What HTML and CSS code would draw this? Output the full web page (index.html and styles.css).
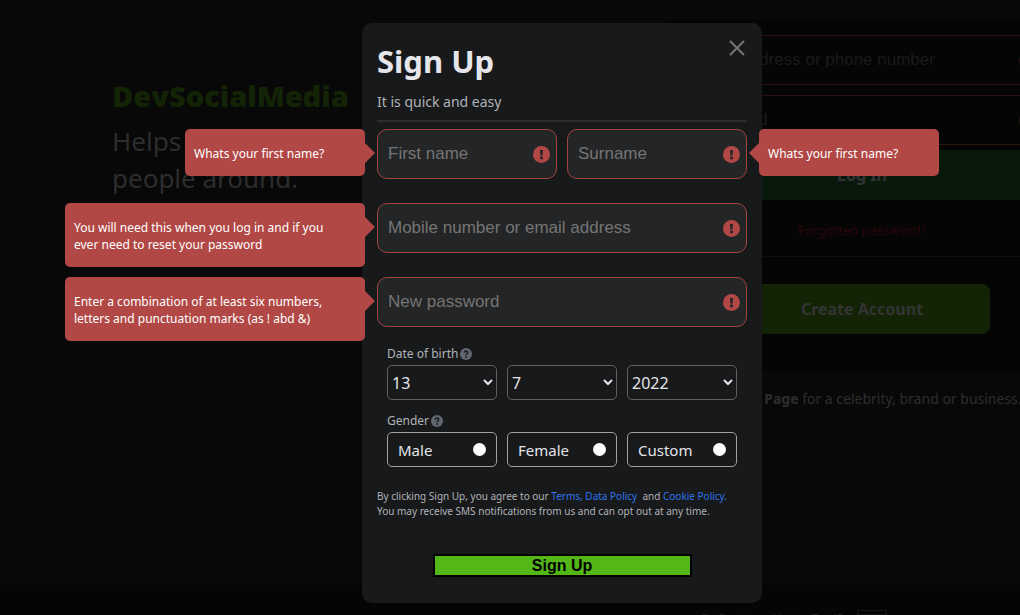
FILE: index.html
```html
<!DOCTYPE html>
<html lang="en">
<head>
<meta charset="utf-8">
<title>DevSocialMedia</title>
<link rel="stylesheet" href="styles.css">
</head>
<body>
<svg class="sprite" aria-hidden="true">
  <symbol id="alert" viewBox="0 0 17 17">
    <circle cx="8.5" cy="8.5" r="8.5" fill="currentColor"/>
    <path d="M7 4h3l-.4 5.400h-2.200z" fill="#242526"/>
    <rect x="7.100" y="10.500" width="2.800" height="2.800" rx=".6" fill="#242526"/>
  </symbol>
  <symbol id="help" viewBox="0 0 12 12">
    <circle cx="6" cy="6" r="6" fill="#606770"/>
    <path d="M4.300 4.700C4.300 2.400 7.800 2.500 7.800 4.500 7.800 5.700 6.100 5.800 6.100 7.200" fill="none" stroke="#18191a" stroke-width="1.400"/>
    <circle cx="6.100" cy="9" r=".9" fill="#18191a"/>
  </symbol>
</svg>

<div class="page">
  <main class="landing">
    <section class="hero">
      <h1 class="brand">DevSocialMedia</h1>
      <p class="tagline">Helps<br>people around.</p>
    </section>
    <section class="login">
      <form class="login-card">
        <div class="login-field"><input type="text" aria-label="Email address or phone number" placeholder="Email address or phone number"><svg class="alert"><use href="#alert"/></svg></div>
        <div class="login-field"><input type="password" aria-label="Password" placeholder="Password"><svg class="alert"><use href="#alert"/></svg></div>
        <button class="login-button" type="button">Log In</button>
        <a class="forgot" href="#">Forgotten password?</a>
        <button class="create-button" type="button">Create Account</button>
      </form>
      <p class="page-note"><b>Create a Page</b> for a celebrity, brand or business.</p>
    </section>
  </main>
  <footer class="footer"><span>De Bootstrap Hatton TotalE</span><span class="footer-box">+</span></footer>
</div>

<div class="overlay">
  <form class="modal" role="dialog" aria-labelledby="signup-title">
    <header class="modal-head">
      <h2 id="signup-title">Sign Up</h2>
      <p>It is quick and easy</p>
      <button class="close" type="button" aria-label="Close"><svg viewBox="0 0 16 16"><path d="M1 1l14 14M15 1L1 15" fill="none" stroke="currentColor" stroke-width="1.800"/></svg></button>
    </header>

    <div class="fields">
      <div class="field half">
        <input type="text" aria-label="First name" placeholder="First name">
        <svg class="alert"><use href="#alert"/></svg>
        <p class="tip tip-left tip-short">Whats your first name?</p>
      </div>
      <div class="field half">
        <input type="text" aria-label="Surname" placeholder="Surname">
        <svg class="alert"><use href="#alert"/></svg>
        <p class="tip tip-right tip-short">Whats your first name?</p>
      </div>
      <div class="field">
        <input type="text" aria-label="Mobile number or email address" placeholder="Mobile number or email address">
        <svg class="alert"><use href="#alert"/></svg>
        <p class="tip tip-left">You will need this when you log in and if you ever need to reset your password</p>
      </div>
      <div class="field">
        <input type="password" aria-label="New password" placeholder="New password">
        <svg class="alert"><use href="#alert"/></svg>
        <p class="tip tip-left">Enter a combination of at least six numbers, letters and punctuation marks (as ! abd &amp;)</p>
      </div>
    </div>

    <fieldset class="group">
      <legend>Date of birth<svg class="help"><use href="#help"/></svg></legend>
      <div class="options">
        <select aria-label="Day"><option>13</option></select>
        <select aria-label="Month"><option>7</option></select>
        <select aria-label="Year"><option>2022</option></select>
      </div>
    </fieldset>
    <fieldset class="group">
      <legend>Gender<svg class="help"><use href="#help"/></svg></legend>
      <div class="options">
        <label class="choice">Male<input type="radio" name="gender"></label>
        <label class="choice">Female<input type="radio" name="gender"></label>
        <label class="choice">Custom<input type="radio" name="gender"></label>
      </div>
    </fieldset>

    <p class="terms">By clicking Sign Up, you agree to our <a href="#">Terms, Data Policy</a> &nbsp;and <a href="#">Cookie Policy.</a><br>You may receive SMS notifications from us and can opt out at any time.</p>
    <button class="submit" type="button">Sign Up</button>
  </form>
</div>
</body>
</html>
```

FILE: styles.css
```css
* { box-sizing: border-box; }
body {
  margin: 0;
  background: #080808;
  color: #2d2d2e;
  font-family: "Noto Sans", "Open Sans", sans-serif;
}
h1, h2, p, fieldset, legend { margin: 0; padding: 0; }
fieldset { border: 0; min-width: 0; }
button, input, select { font: inherit; }
a { text-decoration: none; }
.sprite { display: none; }
.alert { flex: none; width: 17px; height: 17px; color: #b14845; }

.page {
  display: flex;
  flex-direction: column;
  height: 100vh;
  overflow: hidden;
}
.landing {
  display: flex;
  flex: 1 0 auto;
  justify-content: space-between;
  padding: 20px 0 0 112px;
}
.hero { padding-top: 53px; }
.brand {
  color: #132406;
  font-family: "Open Sans", "Noto Sans", sans-serif;
  font-size: 29px;
  line-height: 46px;
  font-weight: 800;
}
.tagline { font-size: 26px; line-height: 37px; padding-top: 4px; }
.login { flex: 0 0 400px; margin-right: -42px; }
.login-card {
  display: flex;
  flex-direction: column;
  height: 351px;
  padding: 15px;
  border-radius: 8px;
  background: #050505;
}
.login-field {
  display: flex;
  align-items: center;
  height: 50px;
  margin-bottom: 10px;
  padding: 0 10px 0 15px;
  border: 1px solid #2b1111;
  border-radius: 6px;
}
.login-field input {
  flex: 1;
  min-width: 0;
  padding: 0;
  border: 0;
  background: transparent;
  font: 17px "Liberation Sans", sans-serif;
}
.login-field input::placeholder { color: #1a1a1a; }
.login-field .alert { color: #2b1111; }
.login-button, .create-button {
  height: 50px;
  border: 0;
  border-radius: 8px;
  color: #333;
  font-size: 16px;
  font-weight: 700;
}
.login-button { margin-top: -5px; background: #08190c; }
.forgot {
  padding: 20px 0 15px;
  border-bottom: 1px solid #0e0e0e;
  color: #2b0609;
  font-size: 13px;
  line-height: 21px;
  text-align: center;
}
.create-button {
  align-self: center;
  width: 256px;
  margin-top: 27px;
  background: #132406;
}
.page-note {
  padding-top: 18px;
  font-size: 14px;
  line-height: 20px;
  text-align: center;
  white-space: nowrap;
}
.footer {
  display: flex;
  flex: 0 0 30px;
  gap: 14px;
  min-height: 0;
  padding: 25px 0 0 702px;
  background: #050505;
  color: #202020;
  font-size: 11px;
  line-height: 16px;
  white-space: nowrap;
}
.footer-box { width: 30px; border: 1px solid #151515; text-align: center; }

.overlay {
  position: fixed;
  inset: 0;
  display: flex;
  justify-content: center;
  align-items: flex-start;
  padding: 23px 0 0 104px;
}
.modal {
  display: flex;
  flex-direction: column;
  width: 400px;
  padding: 13px 15px 26px;
  border-radius: 10px;
  background: #18191a;
  color: #b0b3b8;
}
.modal-head {
  position: relative;
  margin-bottom: 7px;
  padding-bottom: 8px;
  border-bottom: 2px solid #2b2c2e;
}
.modal-head h2 {
  color: #e4e6eb;
  font-size: 31px;
  line-height: 50px;
}
.modal-head p { padding-top: 6px; font-size: 14px; line-height: 20px; }
.close {
  position: absolute;
  top: 4px;
  right: 2px;
  width: 16px;
  height: 16px;
  padding: 0;
  border: 0;
  background: none;
  color: #777879;
}
.close svg { display: block; }

.fields {
  display: grid;
  grid-template-columns: repeat(2, minmax(0, 1fr));
  gap: 24px 10px;
}
.field {
  position: relative;
  display: flex;
  align-items: center;
  grid-column: 1 / -1;
  height: 50px;
  padding: 0 6px 0 10px;
  border: 1px solid #a44340;
  border-radius: 10px;
  background: #242526;
}
.field.half { grid-column: auto; }
.field input {
  flex: 1;
  min-width: 0;
  padding: 0;
  border: 0;
  background: transparent;
  color: #e4e6eb;
  font: 17px "Liberation Sans", sans-serif;
}
.field input::placeholder { color: #757575; }
.tip {
  position: absolute;
  top: -1px;
  width: 300px;
  padding: 16px 30px 14px 9px;
  border-radius: 5px;
  background: #b14845;
  color: #fff;
  font-size: 12px;
  line-height: 17px;
}
.tip-short { width: 180px; }
.tip-left { right: calc(100% + 13px); }
.tip-right { left: calc(100% + 13px); }
.tip::after {
  content: "";
  position: absolute;
  top: 14px;
  border: 10px solid transparent;
}
.tip-left::after { left: 100%; border-right: 0; border-left-color: #b14845; }
.tip-right::after { right: 100%; border-left: 0; border-right-color: #b14845; }

.group { padding: 0 10px; margin-top: 9px; }
.fields + .group { margin-top: 15px; }
.group legend {
  display: flex;
  align-items: center;
  gap: 2px;
  font-size: 12px;
  line-height: 23px;
}
.help { width: 12px; height: 12px; }
.options { display: grid; grid-template-columns: repeat(3, 1fr); gap: 10px; }
.options select, .choice {
  height: 35px;
  border: 1px solid #606162;
  border-radius: 5px;
  background: #18191a;
  color: #e4e6eb;
  font-size: 16px;
}
.choice {
  display: flex;
  align-items: center;
  justify-content: space-between;
  padding: 0 10px;
  border-color: #a0a1a3;
  font-size: 15px;
}
.choice input {
  appearance: none;
  width: 13px;
  height: 13px;
  margin: 0;
  border-radius: 50%;
  background: #fff;
}
.terms { padding-top: 22px; font-size: 10px; line-height: 15px; }
.terms a { color: #2d75ed; }
.submit {
  align-self: center;
  width: 259px;
  margin-top: 35px;
  padding: 0;
  border: 2px solid #000;
  background: #53b717;
  color: #000;
  font: bold 16px/19px "Liberation Sans", sans-serif;
}
```
